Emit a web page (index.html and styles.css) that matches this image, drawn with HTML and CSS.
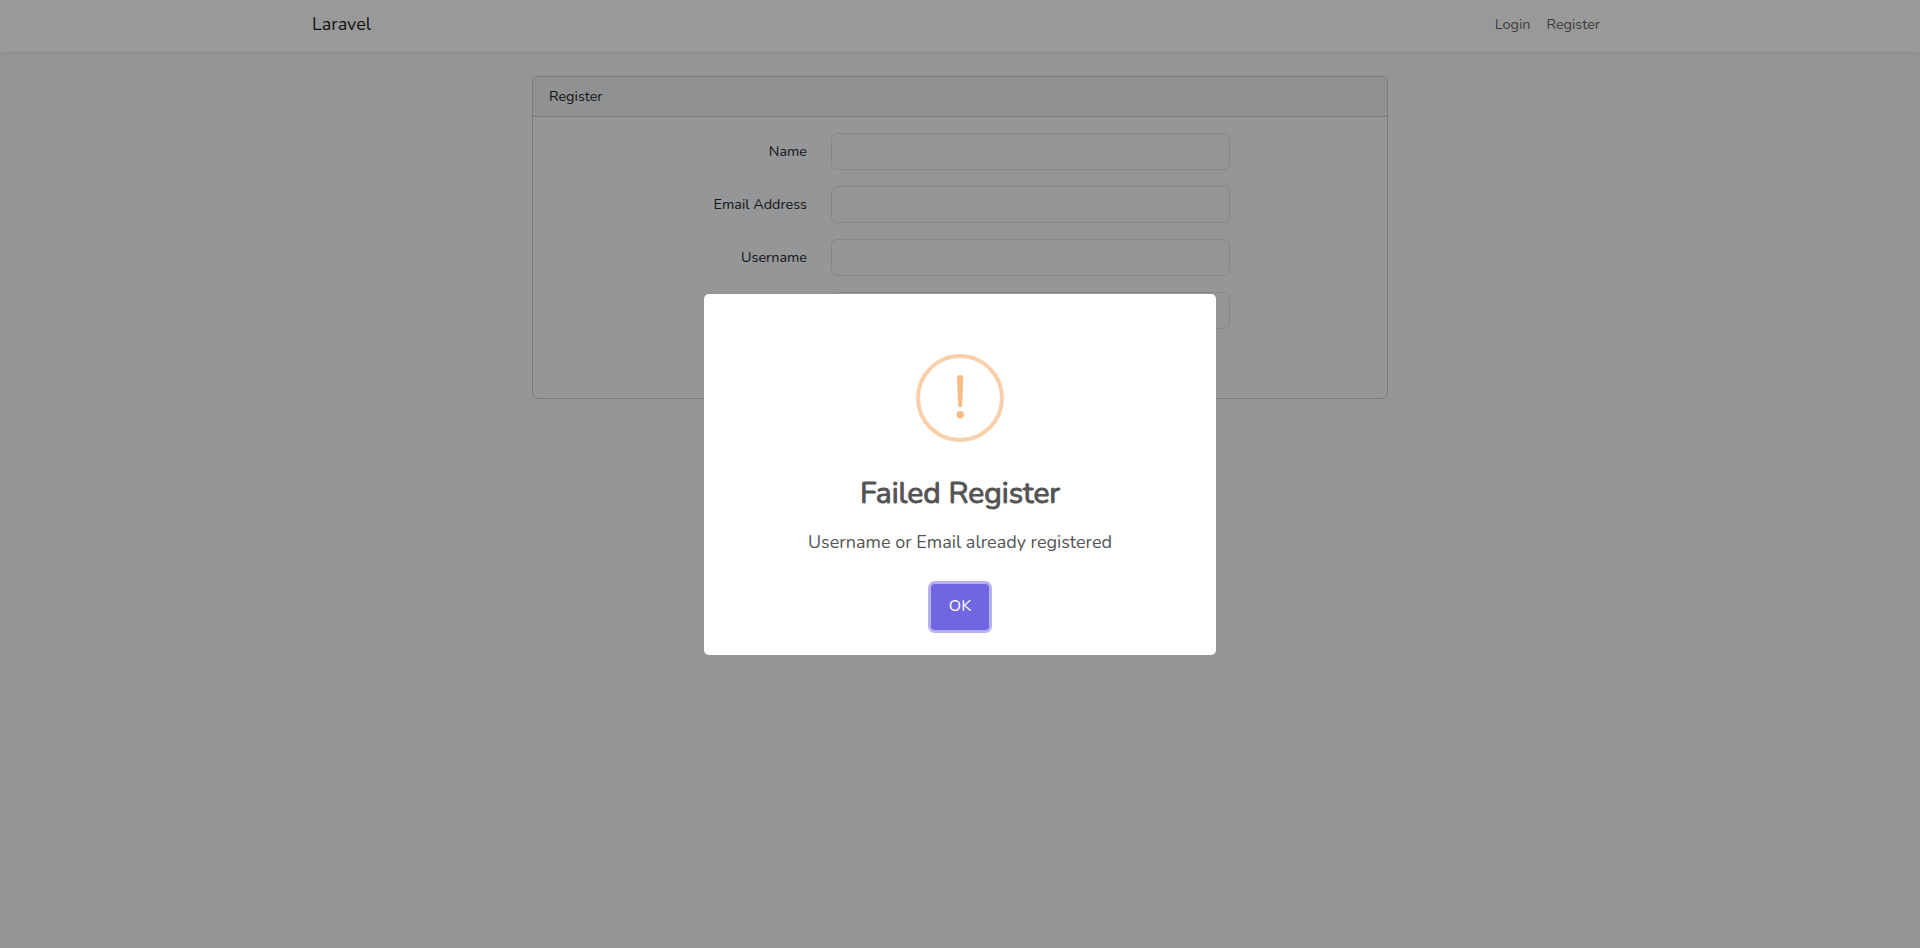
FILE: index.html
```html
<!DOCTYPE html>
<html lang="en">
<head>
<meta charset="utf-8">
<title>Laravel</title>
<link rel="stylesheet" href="styles.css">
</head>
<body>
<nav class="navbar">
  <div class="container">
    <a class="brand">Laravel</a>
    <div class="nav-links"><a>Login</a><a>Register</a></div>
  </div>
</nav>
<main class="main">
  <div class="card">
    <div class="card-header">Register</div>
    <form class="card-body">
      <div class="row"><label>Name</label><input type="text"></div>
      <div class="row"><label>Email Address</label><input type="text"></div>
      <div class="row"><label>Username</label><input type="text"></div>
      <div class="row"><label></label><input type="text"></div>
    </form>
  </div>
</main>
<div class="backdrop">
  <div class="popup">
    <svg class="icon" viewBox="0 0 88 88">
      <circle cx="44" cy="44" r="42" fill="none" stroke="#facea8" stroke-width="4"/>
      <path d="M41 23.500Q41 21 44 21Q47.200 21 47.200 23.500L46.200 51.500Q46.100 53.200 44.200 53.200Q42.300 53.200 42.200 51.500Z" fill="#f8bb86"/>
      <circle cx="44.200" cy="60.800" r="3.700" fill="#f8bb86"/>
    </svg>
    <h2 class="title">Failed Register</h2>
    <div class="message">Username or Email already registered</div>
    <button class="confirm">OK</button>
  </div>
</div>
</body>
</html>
```
FILE: styles.css
```css
* { box-sizing: border-box; }
body {
  margin: 0;
  height: 948px;
  overflow: hidden;
  background: #f8fafc;
  color: #212529;
  font: 14.4px/23px Nunito, Lato, sans-serif;
}
.navbar {
  position: relative;
  height: 52px;
  background: #fff;
  box-shadow: 0 2px 4px rgba(0, 0, 0, .075);
}
.container {
  width: 1296px;
  height: 48px;
  margin: 0 auto;
  display: flex;
  align-items: center;
  justify-content: space-between;
}
.brand { font-size: 18px; color: rgba(0, 0, 0, .9); }
.nav-links { display: flex; gap: 16px; padding-right: 8px; color: rgba(0, 0, 0, .65); }
.main { padding-top: 24px; }
.card {
  width: 856px;
  height: 323px;
  margin: 0 auto;
  border: 1px solid rgba(0, 0, 0, .175);
  border-radius: 6px;
}
.card-header {
  height: 40px;
  padding: 8px 16px;
  border-bottom: 1px solid rgba(0, 0, 0, .175);
  background: rgba(0, 0, 0, .03);
}
.card-body { padding: 16px 0; display: grid; gap: 16px; }
.row { display: flex; gap: 24px; height: 37px; align-items: center; }
.row label { width: 274px; text-align: right; }
.row input {
  width: 399px;
  height: 37px;
  border: 1px solid #dee2e6;
  border-radius: 6px;
  background: #f8fafc;
}
.backdrop {
  position: fixed;
  inset: 0;
  display: flex;
  align-items: center;
  justify-content: center;
  background: rgba(0, 0, 0, .4);
}
.popup {
  width: 512px;
  height: 361px;
  padding-top: 60px;
  display: flex;
  flex-direction: column;
  align-items: center;
  border-radius: 5px;
  background: #fff;
  color: #545454;
}
.icon { width: 88px; height: 88px; flex: none; }
.title {
  margin: 34px 0 0;
  font-size: 30px;
  line-height: 36px;
  font-weight: 400;
  -webkit-text-stroke: 1px #545454;
}
.message { margin-top: 17px; font-size: 18px; line-height: 27px; }
.confirm {
  width: 58px;
  height: 46px;
  margin-top: 28px;
  padding: 0 0 2px;
  border: 0;
  border-radius: 4px;
  background: #7066e0;
  box-shadow: 0 0 0 3px rgba(112, 102, 224, .5);
  color: #fff;
  font: 400 16px/24px Nunito, Lato, sans-serif;
}
```
